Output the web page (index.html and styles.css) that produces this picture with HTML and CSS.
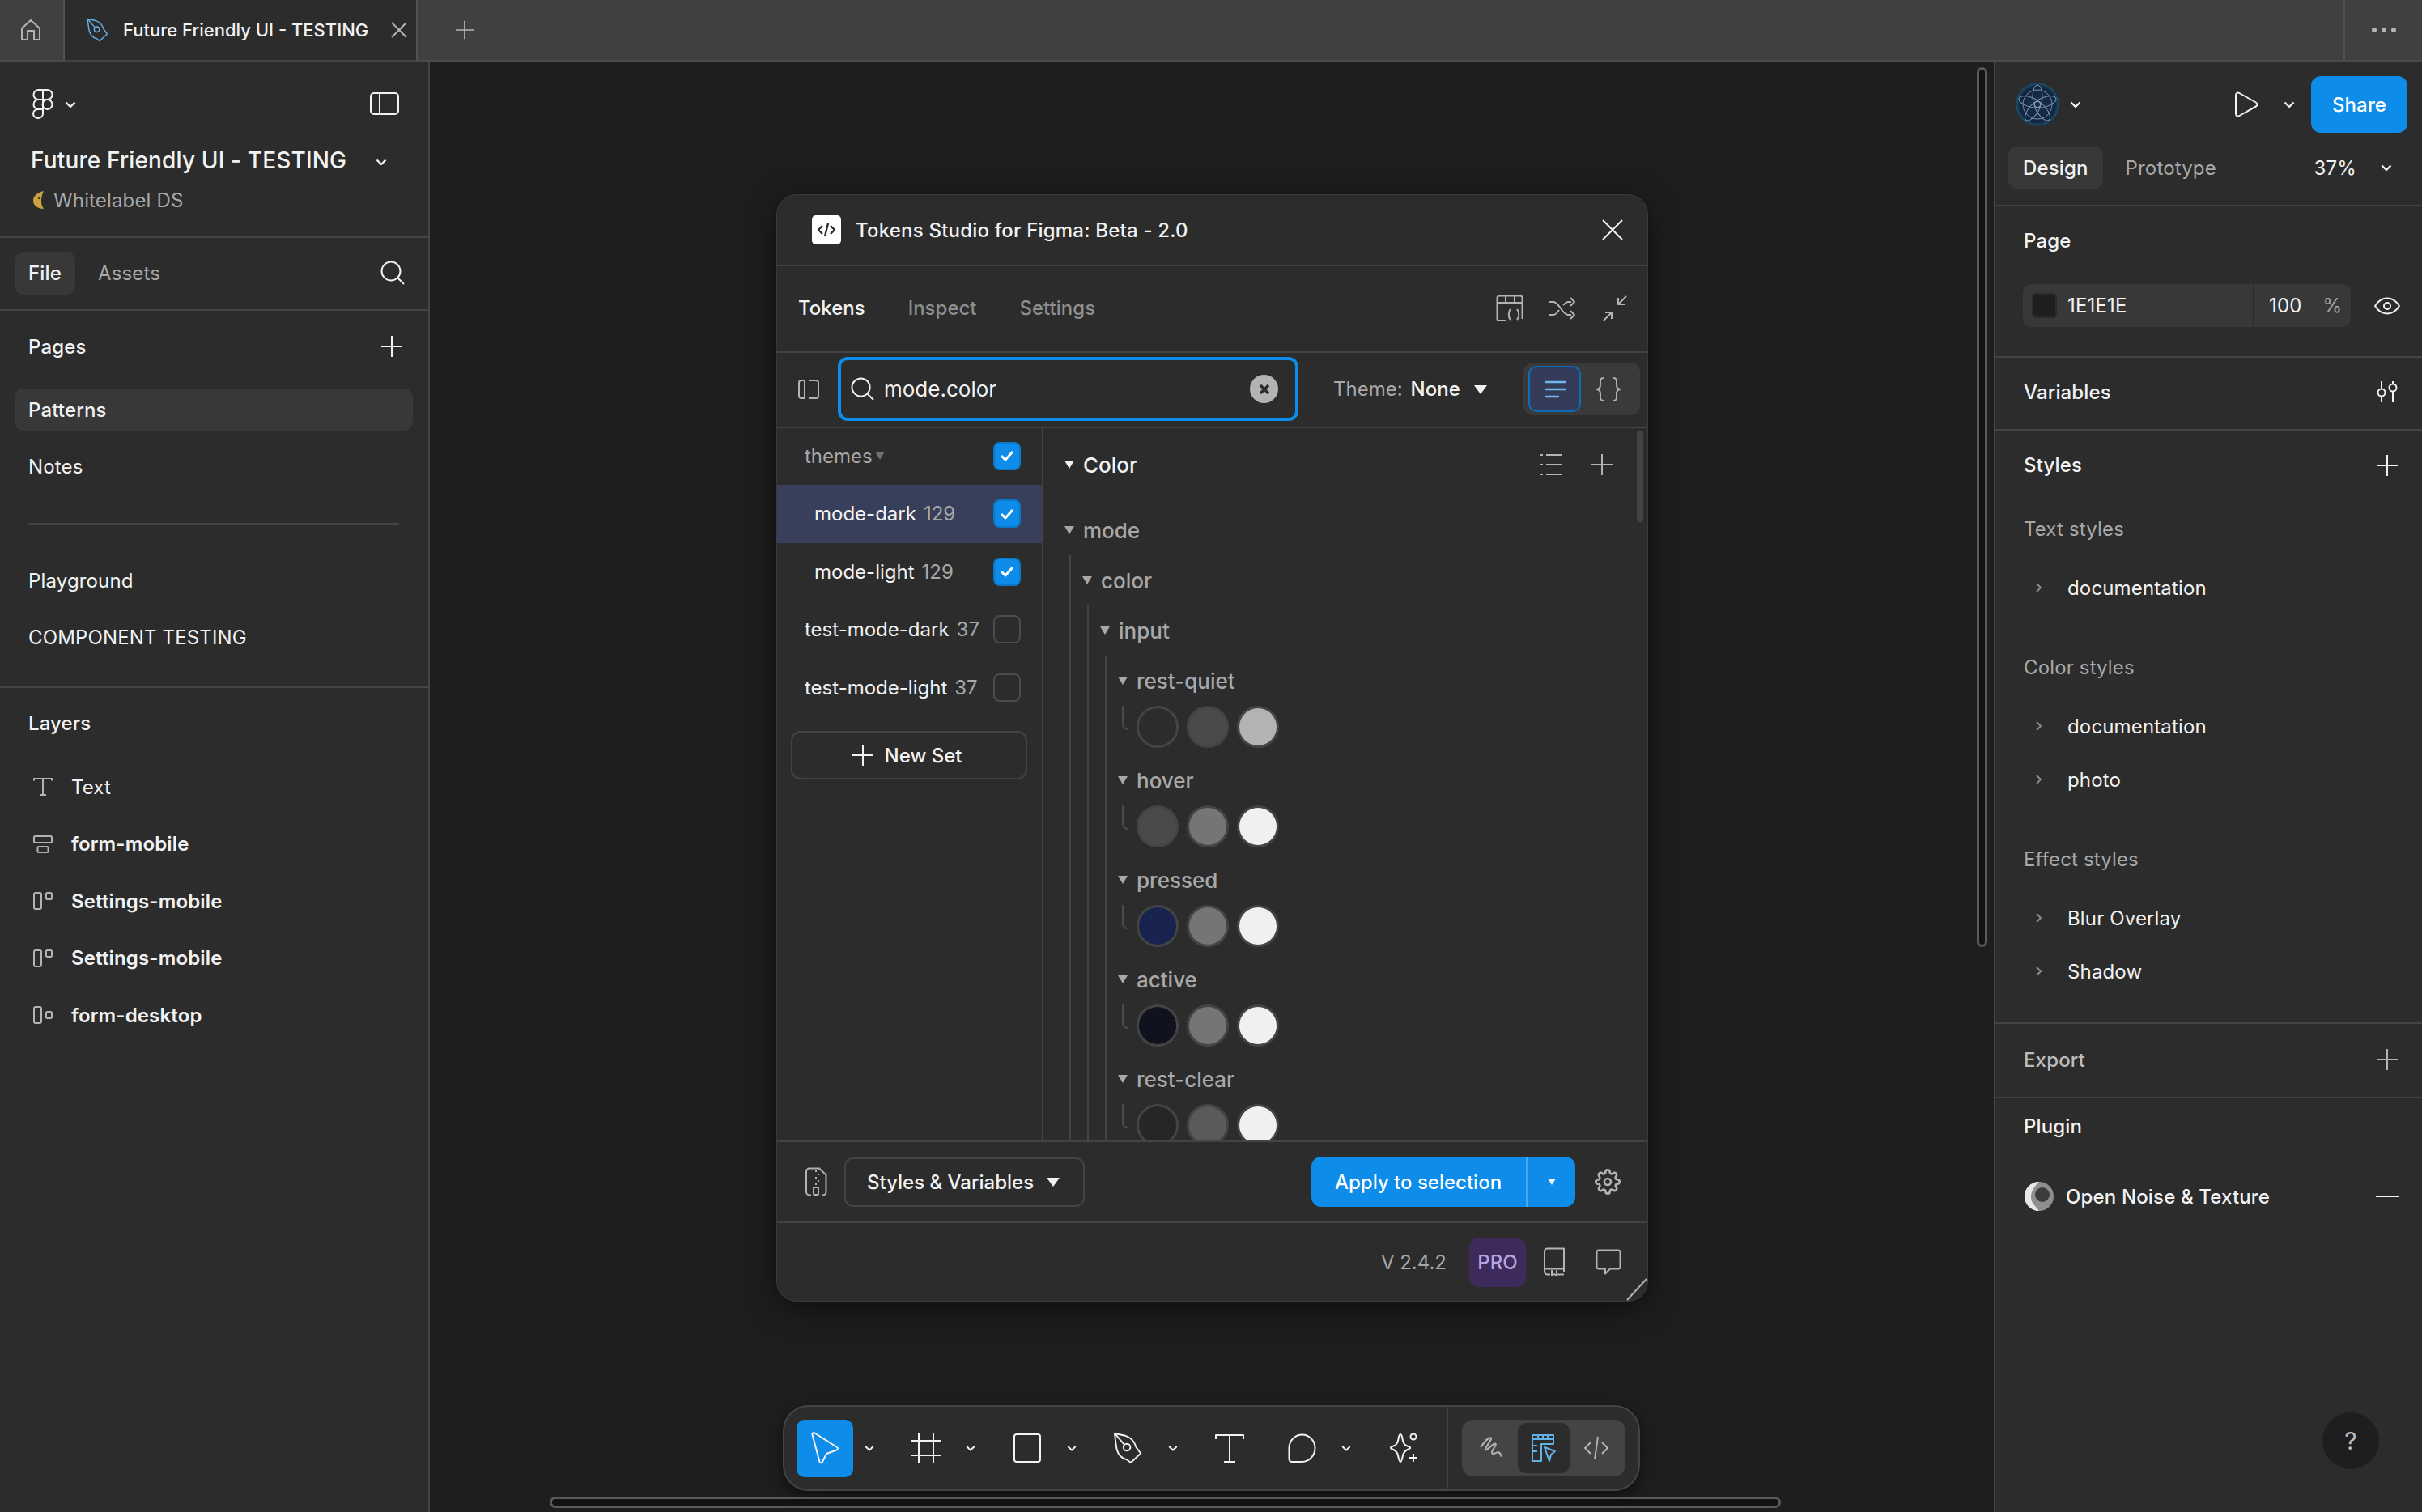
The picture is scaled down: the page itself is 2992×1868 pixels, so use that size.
FILE: index.html
```html
<!DOCTYPE html>
<html lang="en">
<head>
  <meta charset="utf-8">
  <title>Future Friendly UI - TESTING</title>
  <link rel="stylesheet" href="styles.css">
</head>
<body>

<svg class="sprite" width="0" height="0">
  <symbol id="chev" viewBox="0 0 14 9"><path d="M1.5 1.5 7 7l5.500-5.500"/></symbol>
  <symbol id="plus" viewBox="0 0 28 28"><path d="M14 1v26M1 14h26"/></symbol>
  <symbol id="nib" viewBox="0 0 40 42"><path d="M2 2 16 5c7 2 12 8 14 15l6 8-13 12-5-4C9 34 5 26 4 18Z"/><circle cx="18" cy="20" r="4.500"/><path d="M3 3 15 17"/></symbol>
  <symbol id="frame-ico" viewBox="0 0 24 22"><rect x="1" y="1" width="9" height="20" rx="2"/><rect x="16" y="1" width="7" height="8" rx="1.500"/></symbol>
</svg>

<header class="topbar">
  <div class="top-home">
    <svg width="26" height="28" viewBox="0 0 26 28" class="ico-grey"><path d="M2 12 13 2l11 10v14h-7V15H9v11H2Z"/></svg>
  </div>
  <div class="top-tab">
    <svg width="30" height="30" viewBox="0 0 40 42" class="ico-blue"><use href="#nib"/></svg>
    <span class="top-title">Future Friendly UI - TESTING</span>
    <svg width="22" height="22" viewBox="0 0 22 22" class="ico-grey"><path d="M2 2l18 18M20 2 2 20"/></svg>
  </div>
  <div class="top-add">
    <svg width="24" height="24" class="ico-grey"><use href="#plus"/></svg>
  </div>
  <div class="top-menu"><i></i><i></i><i></i></div>
</header>

<div class="workspace">

  <aside class="left-panel">
    <section class="file-head">
      <div class="logo-row">
        <svg width="26" height="37" viewBox="0 0 25 37" class="ico-white">
          <path d="M12.500 1H7a6 6 0 0 0 0 12h5.500ZM12.500 1H18a6 6 0 0 1 0 12h-5.500ZM12.500 13H7a6 6 0 0 0 0 12h5.500Z"/>
          <circle cx="18" cy="19" r="6"/>
          <path d="M7 25a6 5.500 0 1 0 5.500 6v-6Z"/>
        </svg>
        <svg class="chev" width="14" height="9"><use href="#chev"/></svg>
        <svg class="panel-toggle ico-white" width="36" height="28" viewBox="0 0 36 28"><rect x="1" y="1" width="34" height="26" rx="4"/><path d="M12 1v26"/></svg>
      </div>
      <div class="file-title">
        <span>Future Friendly UI - TESTING</span>
        <svg class="chev" width="14" height="9"><use href="#chev"/></svg>
      </div>
      <div class="file-team">
        <svg width="16" height="24" viewBox="0 0 16 24"><path d="M14 1C6 3 1 7 1 13s6 10 13 10c-2-3-3-6-3-10s1-8 3-12Z" fill="#c9a13f"/><circle cx="8" cy="10" r="1.200" fill="#4a3a10"/></svg>
        <span>Whitelabel DS</span>
      </div>
    </section>

    <section class="file-tabs">
      <span class="pill-tab">File</span>
      <span class="tab-muted">Assets</span>
      <svg class="tabs-search ico-white" width="30" height="30" viewBox="0 0 30 30"><circle cx="13" cy="13" r="11.500"/><path d="m21 21 8 8"/></svg>
    </section>

    <section class="pages">
      <div class="panel-heading">
        <span>Pages</span>
        <svg class="ico-white" width="28" height="28"><use href="#plus"/></svg>
      </div>
      <div class="page-row page-current">Patterns</div>
      <div class="page-row">Notes</div>
      <div class="page-rule"></div>
      <div class="page-row">Playground</div>
      <div class="page-row">COMPONENT TESTING</div>
    </section>

    <section class="layers">
      <div class="panel-heading">
        <span>Layers</span>
      </div>
      <div class="layer-list">
        <div class="layer-row">
          <svg class="ico-soft" width="24" height="24" viewBox="0 0 24 24"><path d="M1 4.500V2h22v2.500M12 2v20M8 22h8"/></svg>
          <span>Text</span>
        </div>
        <div class="layer-row layer-frame">
          <svg class="ico-soft" width="24" height="24" viewBox="0 0 24 24"><rect x="1" y="2" width="22" height="8" rx="1.500"/><rect x="5.500" y="15" width="13" height="7" rx="1.500"/></svg>
          <span>form-mobile</span>
        </div>
        <div class="layer-row layer-frame">
          <svg class="ico-soft" width="24" height="22"><use href="#frame-ico"/></svg>
          <span>Settings-mobile</span>
        </div>
        <div class="layer-row layer-frame">
          <svg class="ico-soft" width="24" height="22"><use href="#frame-ico"/></svg>
          <span>Settings-mobile</span>
        </div>
        <div class="layer-row layer-frame">
          <svg class="ico-soft" width="24" height="22" viewBox="0 0 24 22"><rect x="1" y="1" width="9" height="20" rx="2"/><rect x="16" y="7" width="7" height="8" rx="1.500"/></svg>
          <span>form-desktop</span>
        </div>
      </div>
    </section>
  </aside>

  <main class="canvas">

    <div class="plugin">
      <div class="plugin-head">
        <span class="plugin-logo">
          <svg width="24" height="18" viewBox="0 0 24 18"><path d="M7 4 2 9l5 5M17 4l5 5-5 5M14 1l-4 16"/></svg>
        </span>
        <span class="plugin-title">Tokens Studio for Figma: Beta - 2.0</span>
        <svg class="plugin-close ico-white" width="26" height="26" viewBox="0 0 26 26"><path d="M1 1l24 24M25 1 1 25"/></svg>
      </div>

      <div class="plugin-tabs">
        <span class="ptab ptab-on">Tokens</span>
        <span class="ptab">Inspect</span>
        <span class="ptab">Settings</span>
        <div class="ptab-icons">
          <svg class="ico-soft" width="34" height="34" viewBox="0 0 34 34"><path d="M12 32H4a2.500 2.500 0 0 1-2.500-2.500V4A2.500 2.500 0 0 1 4 1.500h26A2.500 2.500 0 0 1 32.500 4v26M1.500 10h31M12 1.500V10M23 1.500V10M18 18c-3 3-3 10 0 13M26 18c3 3 3 10 0 13"/></svg>
          <svg class="ico-soft" width="34" height="30" viewBox="0 0 34 30"><path d="M1 7h5c7 0 11 16 18 16h4M1 23h5c3 0 5-3 7-6M18 11c2-2 4-4 6-4h4M27 2l5 5-5 5M27 18l5 5-5 5"/></svg>
          <svg class="ico-soft" width="34" height="34" viewBox="0 0 34 34"><path d="M31 2 21 12M21 4v8h8M3 32l10-10M13 30v-8H5"/></svg>
        </div>
      </div>

      <div class="plugin-search">
        <svg class="ico-soft" width="26" height="24" viewBox="0 0 26 24"><path d="M8 1H4a3 3 0 0 0-3 3v16a3 3 0 0 0 3 3h4ZM14 1h8a3 3 0 0 1 3 3v16a3 3 0 0 1-3 3h-8"/></svg>
        <div class="search-box">
          <svg class="ico-white" width="29" height="29" viewBox="0 0 30 30"><circle cx="13" cy="13" r="11.500"/><path d="m21 21 8 8"/></svg>
          <span class="search-text">mode.color</span>
          <span class="search-clear">
            <svg width="14" height="14" viewBox="0 0 14 14"><path d="m2 2 10 10M12 2 2 12"/></svg>
          </span>
        </div>
        <div class="theme-pick"><span class="theme-label">Theme:</span> <span class="theme-value">None</span><i class="caret caret-white caret-large"></i></div>
        <div class="view-toggle">
          <span class="view-btn view-on">
            <svg width="28" height="24" viewBox="0 0 28 24"><path d="M1 3h26M1 12h26M1 21h18"/></svg>
          </span>
          <span class="view-btn">
            <svg class="ico-soft" width="32" height="30" viewBox="0 0 32 30"><path d="M10 1C5 1 6 5 6 9c0 4-1 5-4 6 3 1 4 2 4 6 0 4-1 8 4 8M22 1c5 0 4 4 4 8 0 4 1 5 4 6-3 1-4 2-4 6 0 4 1 8-4 8"/></svg>
          </span>
        </div>
      </div>

      <div class="plugin-body">
        <div class="sets">
          <div class="set-row set-group">
            <span class="set-muted">themes</span><i class="caret caret-dim"></i>
            <span class="check check-on"><svg width="20" height="16" viewBox="0 0 20 16"><path d="m3 8 5 5 9-10"/></svg></span>
          </div>
          <div class="set-row set-nested set-current">
            <span>mode-dark</span><span class="set-count">129</span>
            <span class="check check-on"><svg width="20" height="16" viewBox="0 0 20 16"><path d="m3 8 5 5 9-10"/></svg></span>
          </div>
          <div class="set-row set-nested">
            <span>mode-light</span><span class="set-count">129</span>
            <span class="check check-on"><svg width="20" height="16" viewBox="0 0 20 16"><path d="m3 8 5 5 9-10"/></svg></span>
          </div>
          <div class="set-row">
            <span>test-mode-dark</span><span class="set-count">37</span>
            <span class="check"></span>
          </div>
          <div class="set-row">
            <span>test-mode-light</span><span class="set-count">37</span>
            <span class="check"></span>
          </div>
          <div class="new-set">
            <svg class="ico-white" width="28" height="28"><use href="#plus"/></svg>
            <span>New Set</span>
          </div>
        </div>

        <div class="tree">
          <div class="tree-head">
            <i class="caret caret-white"></i>
            <span class="tree-type">Color</span>
            <svg class="tree-list ico-soft" width="28" height="28" viewBox="0 0 28 28"><path d="M8 2h20M8 14h20M8 26h20M1 2h3M1 14h3M1 26h3"/></svg>
            <svg class="ico-soft" width="28" height="28"><use href="#plus"/></svg>
          </div>

          <div class="tree-node"><i class="caret"></i><span>mode</span></div>
          <div class="tree-indent">
            <div class="tree-node"><i class="caret"></i><span>color</span></div>
            <div class="tree-indent">
              <div class="tree-node"><i class="caret"></i><span>input</span></div>
              <div class="tree-indent">

                <div class="tree-node"><i class="caret"></i><span>rest-quiet</span></div>
                <div class="swatches">
                  <i class="elbow"></i>
                  <span class="swatch"></span>
                  <span class="swatch sw-46"></span>
                  <span class="swatch sw-b3"></span>
                </div>

                <div class="tree-node"><i class="caret"></i><span>hover</span></div>
                <div class="swatches">
                  <i class="elbow"></i>
                  <span class="swatch sw-46"></span>
                  <span class="swatch sw-75"></span>
                  <span class="swatch sw-f0"></span>
                </div>

                <div class="tree-node"><i class="caret"></i><span>pressed</span></div>
                <div class="swatches">
                  <i class="elbow"></i>
                  <span class="swatch sw-navy"></span>
                  <span class="swatch sw-75"></span>
                  <span class="swatch sw-f0"></span>
                </div>

                <div class="tree-node"><i class="caret"></i><span>active</span></div>
                <div class="swatches">
                  <i class="elbow"></i>
                  <span class="swatch sw-ink"></span>
                  <span class="swatch sw-75"></span>
                  <span class="swatch sw-f0"></span>
                </div>

                <div class="tree-node"><i class="caret"></i><span>rest-clear</span></div>
                <div class="swatches">
                  <i class="elbow"></i>
                  <span class="swatch sw-26"></span>
                  <span class="swatch sw-55"></span>
                  <span class="swatch sw-f0"></span>
                </div>

              </div>
            </div>
          </div>
          <div class="tree-thumb"></div>
        </div>
      </div>

      <div class="plugin-actions">
        <svg class="ico-soft" width="28" height="36" viewBox="0 0 28 36"><path d="M6 1.500h12l8.500 8v21a4 4 0 0 1-4 4H22M6 1.500a4 4 0 0 0-4 4v25a4 4 0 0 0 4 4h2"/><path d="M14 4v2M17 8v2M14 12v2M17 16v2M14 20v2" /><rect x="11" y="25" width="6" height="9" rx="1.500"/></svg>
        <div class="apply-target">
          <span>Styles &amp; Variables</span><i class="caret caret-white caret-large"></i>
        </div>
        <div class="apply-btn">
          <span class="apply-label">Apply to selection</span>
          <span class="apply-more"><i class="caret caret-white caret-small"></i></span>
        </div>
        <svg class="ico-soft apply-gear" width="32" height="32" viewBox="0 0 24 24"><circle cx="12" cy="12" r="3"/><path d="M19.400 15a1.650 1.650 0 0 0 .33 1.820l.06.06a2 2 0 0 1 0 2.830 2 2 0 0 1-2.830 0l-.06-.06a1.650 1.650 0 0 0-1.820-.33 1.650 1.650 0 0 0-1 1.510V21a2 2 0 0 1-2 2 2 2 0 0 1-2-2v-.09A1.650 1.650 0 0 0 9 19.400a1.650 1.650 0 0 0-1.820.33l-.06.06a2 2 0 0 1-2.830 0 2 2 0 0 1 0-2.830l.06-.06a1.650 1.650 0 0 0 .33-1.820 1.650 1.650 0 0 0-1.510-1H3a2 2 0 0 1-2-2 2 2 0 0 1 2-2h.09A1.650 1.650 0 0 0 4.600 9a1.650 1.650 0 0 0-.33-1.820l-.06-.06a2 2 0 0 1 0-2.830 2 2 0 0 1 2.830 0l.06.06a1.650 1.650 0 0 0 1.820.33H9a1.650 1.650 0 0 0 1-1.510V3a2 2 0 0 1 2-2 2 2 0 0 1 2 2v.09a1.650 1.650 0 0 0 1 1.510 1.650 1.650 0 0 0 1.820-.33l.06-.06a2 2 0 0 1 2.830 0 2 2 0 0 1 0 2.830l-.06.06a1.650 1.650 0 0 0-.33 1.820V9a1.650 1.650 0 0 0 1.510 1H21a2 2 0 0 1 2 2 2 2 0 0 1-2 2h-.09a1.650 1.650 0 0 0-1.510 1z"/></svg>
      </div>

      <div class="plugin-foot">
        <span class="version">V 2.4.2</span>
        <span class="pro">PRO</span>
        <svg class="ico-soft" width="28" height="36" viewBox="0 0 28 36"><path d="M2 30V5a3.500 3.500 0 0 1 3.500-3.500H26V30M2 30a3.500 3.500 0 0 0 3.500 3.500H9M18 33.500h8M2 26.500h24M11 28v7l3-2 3 2v-7"/></svg>
        <svg class="ico-soft" width="32" height="32" viewBox="0 0 32 32"><path d="M4 1.500h24A2.500 2.500 0 0 1 30.500 4v18a2.500 2.500 0 0 1-2.500 2.500H18L12 30.500v-6H4A2.500 2.500 0 0 1 1.500 22V4A2.500 2.500 0 0 1 4 1.500Z"/></svg>
      </div>
      <svg class="plugin-grip ico-soft" width="26" height="28" viewBox="0 0 26 28"><path d="M1 27 25 1"/></svg>
    </div>

    <div class="toolbar">
      <div class="tools">
        <div class="tool-group">
          <span class="tool tool-on">
            <svg class="ico-white" width="36" height="40" viewBox="0 0 36 40"><path d="M2.500 3.500C2 1.500 4 .5 5.500 1.500L33 19c1.500 1 1 3-.5 3.500L20 27 15 37c-.8 1.800-3.200 1.500-3.600-.4Z"/></svg>
          </span>
          <span class="tool-chev"><svg class="chev" width="12" height="9"><use href="#chev"/></svg></span>
        </div>
        <div class="tool-group">
          <span class="tool">
            <svg class="ico-white" width="36" height="36" viewBox="0 0 36 36"><path d="M9 0v36M27 0v36M0 9h36M0 27h36"/></svg>
          </span>
          <span class="tool-chev"><svg class="chev" width="12" height="9"><use href="#chev"/></svg></span>
        </div>
        <div class="tool-group">
          <span class="tool">
            <svg class="ico-white" width="34" height="36" viewBox="0 0 34 36"><rect x="1" y="1" width="32" height="34" rx="3"/></svg>
          </span>
          <span class="tool-chev"><svg class="chev" width="12" height="9"><use href="#chev"/></svg></span>
        </div>
        <div class="tool-group">
          <span class="tool">
            <svg class="ico-white" width="38" height="40" viewBox="0 0 40 42"><use href="#nib"/></svg>
          </span>
          <span class="tool-chev"><svg class="chev" width="12" height="9"><use href="#chev"/></svg></span>
        </div>
        <div class="tool-group">
          <span class="tool">
            <svg class="ico-white" width="36" height="36" viewBox="0 0 36 36"><path d="M1 7V2h34v5M18 2v33M11 35h14"/></svg>
          </span>
        </div>
        <div class="tool-group tool-comment">
          <span class="tool">
            <svg class="ico-white" width="35" height="36" viewBox="0 0 35 36"><path d="M5 35a3.500 3.500 0 0 1-3.500-3.500V18C1.500 9 8.500 1.500 17.500 1.500S33.500 9 33.500 18s-7 17-16 17Z"/></svg>
          </span>
          <span class="tool-chev"><svg class="chev" width="12" height="9"><use href="#chev"/></svg></span>
        </div>
        <div class="tool-group">
          <span class="tool">
            <svg class="ico-white" width="40" height="38" viewBox="0 0 40 38"><path d="M17 2c1.500 0 2 3 3 8s4 6 8 7.500c1.500.6 1.500 2 0 2.500-4 1.500-7 3-8 8-.9 4.500-1.500 8-3 8s-2-3.500-3-8c-1-5-4-6.500-8-8-1.500-.5-1.500-1.900 0-2.500 4-1.500 7-2.500 8-7.500s1.500-8 3-8Z"/><circle cx="33" cy="5" r="3.500"/><path d="M33 26v10M28 31h10"/></svg>
          </span>
        </div>
      </div>
      <div class="toolbar-modes">
        <div class="mode-group">
          <span class="mode-btn">
            <svg class="ico-soft" width="32" height="32" viewBox="0 0 30 30"><path d="M3 14C8 7 11 3 14 3c3 0-1 5-4 10-2 3-2 5 0 4 4-3 8-8 10-7 2 1-4 7-4 10s4 1 6 0c2-1 4 1 5 5"/></svg>
          </span>
          <span class="mode-btn mode-on">
            <svg class="ico-blue" width="32" height="36" viewBox="0 0 32 36"><path d="M2 34V2h26v11H13v21ZM2 7h26M9 2v5M15 2v5M21 2v5M2 15h6M2 22h6"/><path d="M17 17l13 5-5 4-2 8Z"/></svg>
          </span>
          <span class="mode-btn">
            <svg class="ico-soft" width="32" height="30" viewBox="0 0 32 30"><path d="M9 8 2 15l7 7M23 8l7 7-7 7M18 1l-4 28"/></svg>
          </span>
        </div>
      </div>
    </div>

    <div class="scroll-v"></div>
    <div class="scroll-h"></div>
  </main>

  <aside class="right-panel">
    <div class="share-row">
      <svg class="avatar" width="54" height="54" viewBox="0 0 54 54">
        <defs>
          <radialGradient id="av" cx="50%" cy="50%" r="55%"><stop offset="0" stop-color="#1a2f52"/><stop offset=".75" stop-color="#12253f"/><stop offset="1" stop-color="#1d6a92"/></radialGradient>
        </defs>
        <circle cx="27" cy="27" r="26.500" fill="url(#av)"/>
        <g fill="none" stroke="#8496ad" stroke-width="1">
          <circle cx="27" cy="27" r="18"/>
          <ellipse cx="27" cy="17" rx="6" ry="14"/>
          <ellipse cx="27" cy="17" rx="6" ry="14" transform="rotate(72 27 27)"/>
          <ellipse cx="27" cy="17" rx="6" ry="14" transform="rotate(144 27 27)"/>
          <ellipse cx="27" cy="17" rx="6" ry="14" transform="rotate(216 27 27)"/>
          <ellipse cx="27" cy="17" rx="6" ry="14" transform="rotate(288 27 27)"/>
        </g>
      </svg>
      <svg class="chev chev-avatar" width="14" height="9"><use href="#chev"/></svg>
      <svg class="ico-white play" width="30" height="32" viewBox="0 0 30 32"><path d="M2 4.500C2 2 4.300.8 6.400 2l20.500 11.500c2 1.100 2 3.900 0 5L6.400 30C4.300 31.200 2 30 2 27.500Z"/></svg>
      <svg class="chev chev-play" width="14" height="9"><use href="#chev"/></svg>
      <span class="share">Share</span>
    </div>
    <div class="design-tabs">
      <span class="pill-tab">Design</span>
      <span class="tab-muted">Prototype</span>
      <span class="zoom-value">37%</span>
      <svg class="chev" width="14" height="9"><use href="#chev"/></svg>
    </div>

    <section class="prop-page">
      <div class="prop-title">Page</div>
      <div class="page-fill">
        <div class="fill-input">
          <span class="fill-chip"></span>
          <span class="fill-hex">1E1E1E</span>
          <span class="fill-opacity">100</span>
          <span class="fill-unit">%</span>
        </div>
        <svg class="ico-white" width="32" height="22" viewBox="0 0 32 22"><path d="M1 11C5 4.500 10 1.500 16 1.500S27 4.500 31 11c-4 6.500-9 9.500-15 9.500S5 17.500 1 11Z"/><circle cx="16" cy="11" r="4"/></svg>
      </div>
    </section>

    <section class="prop-row prop-vars">
      <span>Variables</span>
      <svg class="ico-white" width="28" height="28" viewBox="0 0 28 28"><path d="M7 1v9M7 20v7M21 1v3M21 14v13"/><circle cx="7" cy="15" r="4.500"/><circle cx="21" cy="9" r="4.500"/></svg>
    </section>

    <section class="prop-styles">
      <div class="prop-row-plain">
        <span>Styles</span>
        <svg class="ico-white" width="28" height="28"><use href="#plus"/></svg>
      </div>
      <div class="style-label style-first">Text styles</div>
      <div class="style-item"><svg class="ico-dim" width="8" height="12" viewBox="0 0 8 12"><path d="m1 1 5 5-5 5"/></svg><span>documentation</span></div>
      <div class="style-label">Color styles</div>
      <div class="style-item"><svg class="ico-dim" width="8" height="12" viewBox="0 0 8 12"><path d="m1 1 5 5-5 5"/></svg><span>documentation</span></div>
      <div class="style-item"><svg class="ico-dim" width="8" height="12" viewBox="0 0 8 12"><path d="m1 1 5 5-5 5"/></svg><span>photo</span></div>
      <div class="style-label">Effect styles</div>
      <div class="style-item"><svg class="ico-dim" width="8" height="12" viewBox="0 0 8 12"><path d="m1 1 5 5-5 5"/></svg><span>Blur Overlay</span></div>
      <div class="style-item"><svg class="ico-dim" width="8" height="12" viewBox="0 0 8 12"><path d="m1 1 5 5-5 5"/></svg><span>Shadow</span></div>
    </section>

    <section class="prop-row prop-export">
      <span>Export</span>
      <svg class="ico-soft" width="28" height="28"><use href="#plus"/></svg>
    </section>

    <section class="prop-plugin">
      <div class="prop-plugin-title">Plugin</div>
      <div class="plugin-entry">
        <svg width="38" height="38" viewBox="0 0 38 38"><circle cx="19" cy="19" r="18" fill="#8e8e8e"/><path d="M19 1a18 18 0 0 0 0 36c-4-6-10-9-10-17S14 6 19 1Z" fill="#e8e8e8"/><circle cx="23" cy="17" r="9" fill="#3c3c3c"/></svg>
        <span>Open Noise &amp; Texture</span>
        <svg class="ico-white entry-minus" width="28" height="4" viewBox="0 0 28 4"><path d="M0 2h28"/></svg>
      </div>
    </section>

    <span class="help">?</span>
  </aside>
</div>

</body>
</html>
```

FILE: styles.css
```css
* {
  box-sizing: border-box;
}

html, body {
  height: 100%;
}

body {
  margin: 0;
  overflow: hidden;
  background: #1e1e1e;
  color: #f2f2f2;
  font-family: Inter, "Noto Sans", sans-serif;
  font-size: 24px;
  letter-spacing: .15px;
}

i {
  font-style: normal;
}

svg {
  flex: none;
  display: block;
}

.sprite {
  position: absolute;
}

/* icon strokes */
.sprite path, svg path {
  stroke-linejoin: round;
}

.ico-white, .ico-grey, .ico-soft, .ico-blue, .ico-dim, .chev {
  fill: none;
  stroke-width: 2;
}

.ico-white { stroke: #f2f2f2; }
.ico-grey { stroke: #b3b3b3; }
.ico-soft { stroke: #b3b3b3; }
.ico-blue { stroke: #62b2e8; }
.ico-dim { stroke: #8a8a8a; }
.chev { stroke: #f2f2f2; stroke-width: 2.4; }

.caret {
  display: block;
  flex: none;
  width: 0;
  height: 0;
  border-left: 6.5px solid transparent;
  border-right: 6.5px solid transparent;
  border-top: 10px solid #a8a8a8;
}

.caret-white { border-top-color: #f2f2f2; }
.caret-dim { border-top-color: #707070; }
.caret-small {
  border-left-width: 5.5px;
  border-right-width: 5.500px;
  border-top-width: 8px;
}

.caret-large {
  border-left-width: 8px;
  border-right-width: 8px;
  border-top-width: 11px;
}

/* top bar */
.topbar {
  display: flex;
  height: 76px;
  background: #3f4140;
  border-bottom: 2px solid #4a4a4a;
}

.top-home {
  width: 80px;
  display: flex;
  align-items: center;
  justify-content: center;
  padding-right: 2px;
  border-right: 2px solid #535353;
}

.top-tab {
  width: 436px;
  margin-bottom: -2px;
  display: flex;
  align-items: center;
  padding: 0 10px 0 26px;
  background: #2c2c2c;
  border-bottom: 2px solid #444;
  border-right: 2px solid #535353;
}

.top-title {
  flex: 1;
  margin-left: 16px;
  font-weight: 500;
  font-size: 22px;
  letter-spacing: 0;
  white-space: nowrap;
}

.top-add {
  width: 116px;
  display: flex;
  align-items: center;
  justify-content: center;
}

.top-menu {
  margin-left: auto;
  width: 97px;
  display: flex;
  align-items: center;
  justify-content: center;
  gap: 6px;
  border-left: 2px solid #535353;
}

.top-menu i {
  width: 6px;
  height: 6px;
  border-radius: 50%;
  background: #b3b3b3;
}

.workspace {
  display: flex;
  height: 1792px;
}

/* left panel */
.left-panel {
  width: 531px;
  flex: none;
  background: #2c2c2c;
  border-right: 2px solid #444;
}

.file-head {
  height: 218px;
  padding: 34px 36px 0 40px;
  border-bottom: 2px solid #444;
}

.logo-row {
  height: 36px;
  display: flex;
  align-items: center;
}

.logo-row .chev {
  margin-left: 14px;
  margin-top: 2px;
}

.panel-toggle {
  margin-left: auto;
}

.file-title {
  height: 40px;
  margin: 32px 0 0 -2px;
  display: flex;
  align-items: center;
  font-size: 28px;
  font-weight: 500;
  white-space: nowrap;
}

.file-title .chev {
  margin-left: 36px;
  margin-top: 4px;
}

.file-team {
  height: 30px;
  margin-top: 14px;
  display: flex;
  align-items: center;
  gap: 10px;
  color: #a8a8a8;
}

.file-tabs {
  height: 90px;
  padding: 0 29px 2px 18px;
  display: flex;
  align-items: center;
  border-bottom: 2px solid #444;
}

.pill-tab {
  height: 53px;
  padding: 0 17px;
  display: flex;
  align-items: center;
  border-radius: 11px;
  background: #383838;
  font-weight: 500;
}

.tab-muted {
  margin-left: 28px;
  color: #a8a8a8;
}

.tabs-search {
  margin-left: auto;
}

.panel-heading {
  height: 88px;
  padding: 0 31px 0 35px;
  display: flex;
  align-items: center;
  justify-content: space-between;
  font-weight: 500;
}

.pages {
  padding-bottom: 35px;
  border-bottom: 2px solid #444;
}

.page-row {
  height: 52px;
  margin: 18px 19px 0 18px;
  padding: 0 17px;
  display: flex;
  align-items: center;
  border-radius: 11px;
}

.panel-heading + .page-row {
  margin-top: 8px;
}

.page-current {
  background: #383838;
  font-weight: 500;
}

.page-rule {
  height: 2px;
  margin: 44px 36px 43px 35px;
  background: #444;
}

.page-rule + .page-row {
  margin-top: 0;
}

.layers .panel-heading {
  height: 86px;
}

.layer-list {
  margin-top: 10px;
  padding-left: 41px;
  display: flex;
  flex-direction: column;
  gap: 18.500px;
}

.layer-row {
  height: 52px;
  display: flex;
  align-items: center;
  gap: 23px;
}

.layer-frame {
  font-weight: 600;
}

/* canvas */
.canvas {
  flex: 1;
  position: relative;
}

.scroll-v {
  position: absolute;
  left: 1911px;
  top: 7px;
  width: 13px;
  height: 1087px;
  border: 3px solid #5a5a5a;
  border-radius: 7px;
  background: #121212;
}

.scroll-h {
  position: absolute;
  left: 148px;
  top: 1773px;
  width: 1521px;
  height: 14px;
  border: 3px solid #5a5a5a;
  border-radius: 7px;
  background: #121212;
}

/* plugin window */
.plugin {
  position: absolute;
  left: 429px;
  top: 165px;
  width: 1075px;
  height: 1366px;
  display: flex;
  flex-direction: column;
  background: #2c2c2c;
  border-radius: 24px;
  box-shadow: 0 0 0 1px #3a3a3a, 0 8px 40px rgba(0, 0, 0, .6);
  overflow: hidden;
  letter-spacing: 0;
}

.plugin-head {
  height: 88px;
  flex: none;
  padding: 0 30px 0 43px;
  display: flex;
  align-items: center;
  border-bottom: 2px solid #444;
}

.plugin-logo {
  width: 36px;
  height: 36px;
  display: flex;
  align-items: center;
  justify-content: center;
  border-radius: 5px;
  background: #fff;
}

.plugin-logo svg {
  fill: none;
  stroke: #2c2c2c;
  stroke-width: 2.4;
}

.plugin-title {
  flex: 1;
  margin-left: 18px;
  font-weight: 500;
  letter-spacing: .2px;
}

.plugin-tabs {
  height: 107px;
  flex: none;
  padding: 0 23px 2px 26px;
  display: flex;
  align-items: center;
  border-bottom: 2px solid #444;
}

.ptab {
  margin-right: 53px;
  font-weight: 500;
  color: #8e8e8e;
}

.ptab-on {
  color: #f2f2f2;
}

.ptab-icons {
  margin-left: auto;
  display: flex;
  align-items: center;
  gap: 31px;
}

.plugin-search {
  height: 93px;
  flex: none;
  padding: 0 9px 2px 26px;
  display: flex;
  align-items: center;
  border-bottom: 2px solid #444;
}

.search-box {
  width: 569px;
  height: 79px;
  margin-left: 23px;
  padding: 0 21px 0 12px;
  display: flex;
  align-items: center;
  border: 4px solid #0d8ce9;
  border-radius: 12px;
}

.search-text {
  flex: 1;
  margin-left: 12px;
  font-size: 26px;
}

.search-clear {
  width: 35px;
  height: 35px;
  display: flex;
  align-items: center;
  justify-content: center;
  border-radius: 50%;
  background: #b3b3b3;
}

.search-clear svg {
  fill: none;
  stroke: #2c2c2c;
  stroke-width: 3.500;
}

.theme-pick {
  margin-left: 43px;
  display: flex;
  align-items: center;
  gap: 10px;
}

.theme-label {
  color: #a8a8a8;
}

.theme-value {
  font-weight: 500;
}

.theme-pick .caret {
  margin-left: 7px;
  margin-top: 2px;
}

.view-toggle {
  margin-left: auto;
  width: 144px;
  height: 65px;
  padding: 4px 6px;
  display: flex;
  align-items: center;
  border-radius: 12px;
  background: #3a3a3a;
}

.view-btn {
  height: 57px;
  flex: 1;
  display: flex;
  align-items: center;
  justify-content: center;
  border-radius: 10px;
}

.view-on {
  flex: none;
  width: 65px;
  background: #353c5a;
  border: 2px solid #0b6dbb;
}

.view-on svg {
  fill: none;
  stroke: #6cb7ee;
  stroke-width: 2.500;
}

.plugin-body {
  flex: 1;
  min-height: 0;
  display: flex;
}

.sets {
  width: 329px;
  flex: none;
  padding-top: 0;
  border-right: 2px solid #444;
}

.set-row {
  height: 71.500px;
  padding: 0 26px 0 34px;
  display: flex;
  align-items: center;
  white-space: nowrap;
}

.set-group {
  height: 70px;
  padding-bottom: 2px;
}

.set-nested {
  padding-left: 46px;
}

.set-current {
  background: #383f5b;
}

.set-muted {
  color: #a8a8a8;
}

.set-group .caret {
  margin-left: 3px;
}

.set-count {
  margin-left: 9px;
  color: #a8a8a8;
}

.check {
  width: 34px;
  height: 35px;
  margin-left: auto;
  display: flex;
  align-items: center;
  justify-content: center;
  border: 2px solid #4c4c4c;
  border-radius: 8px;
}

.check-on {
  background: #0d8ce9;
  border-color: #0b78c9;
}

.check-on svg {
  fill: none;
  stroke: #fff;
  stroke-width: 3;
}

.new-set {
  height: 60px;
  margin: 18px 18px 0 17px;
  padding-right: 6px;
  display: flex;
  align-items: center;
  justify-content: center;
  gap: 13px;
  border: 2px solid #444;
  border-radius: 12px;
  font-weight: 500;
}

.tree {
  flex: 1;
  position: relative;
  overflow: hidden;
  padding-left: 26px;
  color: #a8a8a8;
}

.tree-head {
  height: 90px;
  margin-bottom: 5px;
  padding-right: 42px;
  display: flex;
  align-items: center;
  gap: 11px;
}

.tree-type {
  flex: 1;
  color: #f2f2f2;
  font-size: 26px;
  font-weight: 500;
}

.tree-list {
  margin-right: 24px;
}

.tree-node {
  height: 62px;
  display: flex;
  align-items: center;
  gap: 11px;
  font-size: 26px;
  font-weight: 500;
}

.tree-indent {
  margin-left: 6px;
  padding-left: 14px;
  border-left: 2px solid #444;
}

.swatches {
  height: 61px;
  padding-left: 5px;
  display: flex;
  gap: 10px;
}

.elbow {
  width: 8px;
  height: 30px;
  margin-right: 0;
  border-left: 2px solid #4a4a4a;
  border-bottom: 2px solid #4a4a4a;
  border-bottom-left-radius: 7px;
}

.swatch {
  width: 52px;
  height: 52px;
  border-radius: 50%;
  border: 3px solid #444;
}

.sw-46 { background: #4a4a4a; }
.sw-55 { background: #5a5a5a; }
.sw-75 { background: #757575; }
.sw-b3 { background: #b3b3b3; }
.sw-f0 { background: #f0f0f0; }
.sw-navy { background: #18244f; }
.sw-ink { background: #10131f; }
.sw-26 { background: #262626; }

.tree-thumb {
  position: absolute;
  right: 5px;
  top: 3px;
  width: 8px;
  height: 113px;
  border-radius: 4px;
  background: #444;
}

.plugin-actions {
  height: 102px;
  flex: none;
  padding: 0 33px 0 34px;
  display: flex;
  align-items: center;
  border-top: 2px solid #444;
  border-bottom: 2px solid #444;
}

.apply-target {
  width: 297px;
  height: 61px;
  margin-left: 21px;
  padding: 0 29px 0 26px;
  display: flex;
  align-items: center;
  justify-content: space-between;
  border: 2px solid #444;
  border-radius: 11px;
  font-weight: 500;
}

.apply-btn {
  height: 62px;
  margin-left: auto;
  display: flex;
  align-items: center;
  border-radius: 12px;
  background: #0d8ce9;
  color: #fff;
  font-weight: 500;
}

.apply-label {
  width: 265px;
  padding-left: 29px;
  white-space: nowrap;
}

.apply-more {
  width: 61px;
  height: 62px;
  display: flex;
  align-items: center;
  justify-content: center;
  border-left: 2px solid #4aa8ef;
}

.apply-gear {
  margin-left: 24px;
}

.plugin-foot {
  height: 96px;
  flex: none;
  padding: 0 32px 0 0;
  display: flex;
  align-items: center;
  justify-content: flex-end;
}

.version {
  color: #a8a8a8;
}

.pro {
  width: 70px;
  height: 61px;
  margin: 0 21px 0 28px;
  display: flex;
  align-items: center;
  justify-content: center;
  border-radius: 12px;
  background: #3e2b5c;
  color: #b9a4dd;
  font-weight: 500;
}

.plugin-foot svg + svg {
  margin-left: 37px;
}

.plugin-grip {
  position: absolute;
  right: 0;
  bottom: 0;
}

/* toolbar */
.toolbar {
  position: absolute;
  left: 436px;
  top: 1660px;
  width: 1059px;
  height: 106px;
  padding: 0 15px;
  display: flex;
  align-items: center;
  background: #2c2c2c;
  border: 2px solid #444;
  border-radius: 32px;
  box-shadow: 0 6px 18px rgba(0, 0, 0, .5);
}

.tools {
  display: flex;
  gap: 15px;
}

.tool-group {
  display: flex;
}

.tool-comment {
  margin-left: 4px;
}

.tool {
  width: 70px;
  height: 71px;
  display: flex;
  align-items: center;
  justify-content: center;
  border-radius: 10px;
}

.tool-on {
  background: #0d8ce9;
}

.tool-chev {
  width: 40px;
  display: flex;
  align-items: center;
  justify-content: center;
}

.toolbar-modes {
  height: 104px;
  margin-left: 19px;
  padding-left: 17px;
  display: flex;
  align-items: center;
  border-left: 2px solid #444;
}

.mode-group {
  width: 202px;
  height: 70px;
  padding: 0 4px;
  display: flex;
  align-items: center;
  border-radius: 14px;
  background: #444;
}

.mode-btn {
  flex: 1;
  height: 62px;
  display: flex;
  align-items: center;
  justify-content: center;
  border-radius: 10px;
}

.mode-on {
  background: #2c2c2c;
}

/* right panel */
.right-panel {
  width: 529px;
  flex: none;
  position: relative;
  background: #2c2c2c;
  border-left: 2px solid #444;
}

.share-row {
  height: 106px;
  padding: 0 18px 0 25px;
  display: flex;
  align-items: center;
}

.chev-avatar {
  margin-left: 13px;
}

.play {
  margin-left: 189px;
}

.chev-play {
  margin-left: 31px;
}

.share {
  width: 119px;
  height: 70px;
  flex: none;
  margin-left: 20px;
  display: flex;
  align-items: center;
  justify-content: center;
  border-radius: 12px;
  background: #0d8ce9;
  color: #fff;
  font-weight: 500;
}

.design-tabs {
  height: 73px;
  padding: 0 37px 21px 16px;
  display: flex;
  align-items: center;
  border-bottom: 2px solid #444;
}

.design-tabs .pill-tab {
  height: 52px;
  padding: 0 18px;
}

.zoom-value {
  margin-left: auto;
  margin-right: 30px;
}

.prop-page {
  height: 187px;
  border-bottom: 2px solid #444;
}

.prop-title {
  height: 85px;
  padding-left: 35px;
  display: flex;
  align-items: center;
  font-weight: 500;
}

.page-fill {
  margin-top: 11px;
  padding: 0 27px 0 34px;
  display: flex;
  align-items: center;
  justify-content: space-between;
}

.fill-input {
  width: 405px;
  height: 53px;
  padding-left: 11px;
  display: flex;
  align-items: center;
  border-radius: 10px;
  background: #383838;
}

.fill-chip {
  width: 31px;
  height: 31px;
  border-radius: 5px;
  background: #1e1e1e;
  border: 2px solid #2a2a2a;
}

.fill-hex {
  width: 231px;
  margin-left: 13px;
  height: 53px;
  display: flex;
  align-items: center;
  border-right: 2px solid #2c2c2c;
}

.fill-opacity {
  margin-left: 18px;
}

.fill-unit {
  margin-left: 26px;
  color: #a8a8a8;
}

.prop-row {
  height: 90px;
  padding: 0 29px 4px 35px;
  display: flex;
  align-items: center;
  justify-content: space-between;
  border-bottom: 2px solid #444;
  font-weight: 500;
}

.prop-styles {
  padding: 0 29px 38px 35px;
  border-bottom: 2px solid #444;
}

.prop-row-plain {
  height: 85px;
  display: flex;
  align-items: center;
  justify-content: space-between;
  font-weight: 500;
}

.style-label {
  height: 40px;
  margin-top: 53px;
  margin-bottom: 28px;
  display: flex;
  align-items: center;
  color: #a8a8a8;
}

.style-first {
  margin-top: 16px;
}

.style-item {
  height: 50px;
  padding-left: 15px;
  display: flex;
  align-items: center;
  gap: 31px;
}

.style-item + .style-item {
  margin-top: 16px;
}

.prop-export {
  height: 92px;
  padding-bottom: 2px;
  color: #bdbdbd;
}

.prop-plugin {
  padding: 0 29px 0 35px;
}

.prop-plugin-title {
  height: 68px;
  display: flex;
  align-items: center;
  font-weight: 500;
}

.plugin-entry {
  height: 50px;
  margin-top: 28px;
  display: flex;
  align-items: center;
  gap: 14px;
  font-weight: 500;
}

.entry-minus {
  margin-left: auto;
}

.help {
  position: absolute;
  right: 53px;
  bottom: 53px;
  width: 70px;
  height: 70px;
  display: flex;
  align-items: center;
  justify-content: center;
  border-radius: 50%;
  background: #1e1e1e;
  color: #bdbdbd;
  font-size: 30px;
}
```
